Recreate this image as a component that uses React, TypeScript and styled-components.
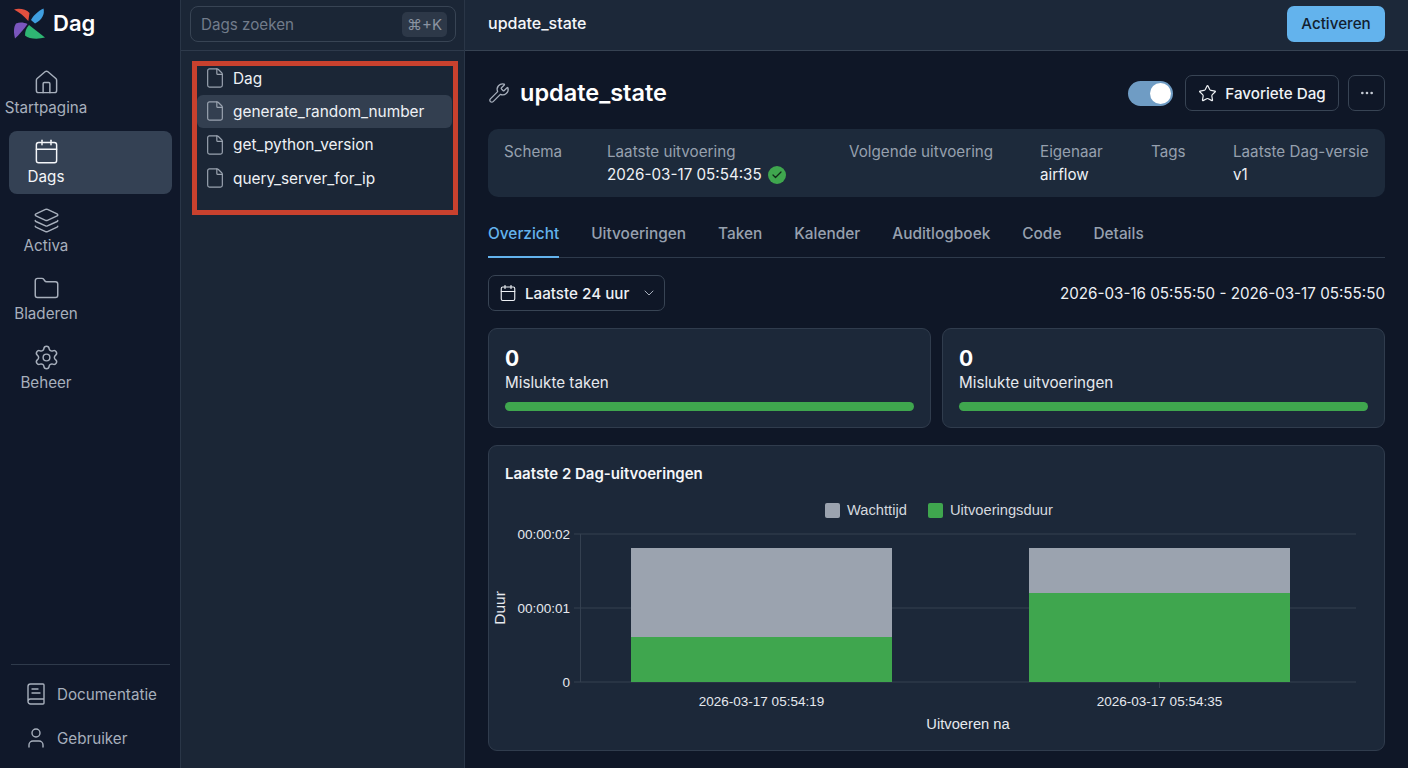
import styled, { createGlobalStyle } from 'styled-components';
import { BookText, Calendar, ChevronDown, Check, Ellipsis, File, Folder, House, Layers, Settings, Star, User, Wrench } from 'lucide-react';

const GlobalStyle = createGlobalStyle`
	html, body {
		margin: 0;
		padding: 0;
		background: #0f1727;
	}
	* {
		box-sizing: border-box;
	}
`;

const Page = styled.div`
	display: grid;
	grid-template-columns: 181px 284px 943px;
	width: 1408px;
	height: 768px;
	overflow: hidden;
	font-family: Inter, 'Noto Sans', sans-serif;
	font-size: 15.2px;
	color: #f4f6f9;
`;

const Sidebar = styled.aside`
	display: flex;
	flex-direction: column;
	background: #10182a;
	border-right: 1px solid #2a3647;
	padding: 8px 10px 15px 9px;
`;

const Brand = styled.div`
	display: flex;
	align-items: center;
	gap: 7px;
	height: 32px;
	margin: 0 0 22px 5px;
	font-size: 22px;
	font-weight: 600;
	line-height: 28px;
	color: #fff;
`;

const BrandName = styled.span`
	margin-bottom: 3px;
`;

const Nav = styled.nav`
	display: flex;
	flex-direction: column;
	gap: 5.75px;
	margin-right: -2px;
`;

const NavItem = styled.a<{ $active?: boolean }>`
	display: block;
	height: 63px;
	border-radius: 8px;
	background: ${(p) => (p.$active ? '#344154' : 'transparent')};
	color: ${(p) => (p.$active ? '#f4f6f9' : '#a7afbc')};
`;

const NavInner = styled.span`
	display: flex;
	flex-direction: column;
	align-items: center;
	gap: 1px;
	width: 74px;
	padding-top: 7px;
	white-space: nowrap;
	line-height: 22px;
`;

const SidebarFoot = styled.div`
	display: flex;
	flex-direction: column;
	gap: 14px;
	margin-top: auto;
	margin-left: 2px;
	padding: 14px 0 0 13px;
	border-top: 1px solid #2f3a4b;
`;

const FootLink = styled.a`
	display: flex;
	align-items: center;
	gap: 9px;
	height: 30px;
	color: #a7afbc;
`;

const Panel = styled.section`
	background: #1b2636;
	border-right: 1px solid #2a3647;
`;

const SearchBar = styled.div`
	height: 51px;
	padding: 6px 8px 0 9px;
	border-bottom: 1px solid #2e3a4b;
`;

const SearchBox = styled.div`
	display: flex;
	align-items: center;
	justify-content: space-between;
	height: 36px;
	padding: 0 8px 0 10px;
	border: 1px solid #384454;
	border-radius: 8px;
	color: #727c8b;
`;

const Kbd = styled.span`
	padding: 3px 5px;
	border-radius: 5px;
	background: #2d3848;
	color: #8a93a1;
	font-size: 15px;
	line-height: 19px;
`;

const MarkBox = styled.div`
	display: flex;
	flex-direction: column;
	height: 154px;
	margin: 10px 6px 0 11px;
	padding: 0 1px 0 0;
	border: 5px solid #c9412e;
`;

const FileRow = styled.div<{ $active?: boolean }>`
	display: flex;
	align-items: center;
	gap: 7px;
	height: 33.3px;
	padding-left: 7px;
	border-radius: 6px;
	background: ${(p) => (p.$active ? '#333f50' : 'transparent')};
	color: #eef1f5;
	font-size: 15.4px;
	flex: none;
	&:first-child {
		margin-top: -4.5px;
	}
	svg {
		color: #9aa3b0;
		flex: none;
	}
`;

const Main = styled.main`
	display: flex;
	flex-direction: column;
	background: #0f1727;
`;

const TopBar = styled.header`
	display: flex;
	align-items: center;
	justify-content: space-between;
	height: 51px;
	padding: 0 23px 3px;
	background: #1c2839;
	border-bottom: 1px solid #364252;
	font-size: 16px;
	font-weight: 500;
	flex: none;
`;

const TopTitle = styled.span`
	margin-bottom: 2px;
`;

const PrimaryButton = styled.button`
	height: 36px;
	width: 98px;
	border: 0;
	border-radius: 7px;
	background: #63b3ed;
	color: #12202f;
	font: 500 15.2px Inter, sans-serif;
`;

const Content = styled.div`
	display: flex;
	flex-direction: column;
	padding: 24px 23px 0;
`;

const TitleRow = styled.div`
	display: flex;
	align-items: center;
	height: 36px;
`;

const Heading = styled.h1`
	margin: 0 auto 0 10px;
	color: #fff;
	font-size: 23.5px;
	font-weight: 600;
	line-height: 36px;
`;

const Toggle = styled.span`
	display: flex;
	align-items: center;
	justify-content: flex-end;
	width: 45px;
	height: 25px;
	margin-right: 12px;
	padding: 2px;
	border-radius: 13px;
	background: #6f9cc4;
	&::after {
		content: '';
		width: 21px;
		height: 21px;
		border-radius: 50%;
		background: #fff;
	}
`;

const OutlineButton = styled.button<{ $square?: boolean }>`
	display: flex;
	align-items: center;
	justify-content: center;
	gap: 8px;
	width: ${(p) => (p.$square ? '37px' : '154px')};
	height: 36px;
	margin-left: ${(p) => (p.$square ? '9px' : '0')};
	border: 1px solid #384454;
	border-radius: 7px;
	background: transparent;
	color: #f0f3f6;
	font: 500 15.2px Inter, sans-serif;
`;

const MetaCard = styled.div`
	display: grid;
	grid-template-columns: 103px 242px 191px 111px 82px 1fr;
	height: 68px;
	margin-top: 18px;
	padding: 12px 16px 0;
	border-radius: 10px;
	background: #1d2a3b;
`;

const MetaCol = styled.div`
	display: flex;
	flex-direction: column;
	gap: 1px;
	white-space: nowrap;
`;

const MetaLabel = styled.span`
	color: #96a0ae;
	line-height: 22px;
`;

const MetaValue = styled.span`
	display: flex;
	align-items: center;
	gap: 6px;
	color: #eef1f5;
	line-height: 22px;
`;

const StatusDot = styled.span`
	display: flex;
	align-items: center;
	justify-content: center;
	width: 18px;
	height: 18px;
	border-radius: 50%;
	background: #3fa64e;
	color: #0f2a18;
`;

const Tabs = styled.div`
	display: flex;
	gap: 32px;
	height: 61px;
	border-bottom: 1px solid #2e3a4b;
	font-size: 15.4px;
	flex: none;
`;

const Tab = styled.a<{ $active?: boolean }>`
	height: 61px;
	padding-top: 26px;
	line-height: 22px;
	font-weight: 500;
	color: ${(p) => (p.$active ? '#63b3ed' : '#97a1af')};
	border-bottom: 2px solid ${(p) => (p.$active ? '#63b3ed' : 'transparent')};
`;

const FilterRow = styled.div`
	display: flex;
	align-items: center;
	justify-content: space-between;
	margin-top: 17px;
	color: #eef1f5;
`;

const RangeSelect = styled.div`
	display: flex;
	align-items: center;
	gap: 8px;
	width: 177px;
	height: 36px;
	padding-left: 10px;
	border: 1px solid #384454;
	border-radius: 7px;
	font-weight: 500;
	svg:last-child {
		margin-left: 4px;
		color: #a7afbc;
	}
`;

const StatGrid = styled.div`
	display: grid;
	grid-template-columns: 1fr 1fr;
	gap: 11px;
	margin-top: 17px;
`;

const Card = styled.div`
	border: 1px solid #303c4d;
	border-radius: 9px;
	background: #1c2839;
`;

const StatCard = styled(Card)`
	height: 100px;
	padding: 17px 16px 0;
`;

const StatNumber = styled.div`
	color: #fff;
	font-size: 21px;
	font-weight: 700;
	line-height: 25px;
`;

const StatLabel = styled.div`
	line-height: 24px;
	color: #e6e9ee;
`;

const Progress = styled.div`
	height: 9px;
	margin-top: 7px;
	border-radius: 5px;
	background: #3fa64e;
`;

const ChartCard = styled(Card)`
	height: 306px;
	margin-top: 17px;
	padding-top: 16px;
`;

const ChartTitle = styled.h2`
	margin: 0 0 4px 16px;
	color: #f4f6f9;
	font-size: 15px;
	font-weight: 600;
	line-height: 24px;
`;

const ChartSvg = styled.svg`
	display: block;
	font-family: 'Liberation Sans', Arial, sans-serif;
	font-size: 14.7px;
`;

const navItems = [
	{ label: 'Startpagina', icon: House },
	{ label: 'Dags', icon: Calendar, active: true },
	{ label: 'Activa', icon: Layers },
	{ label: 'Bladeren', icon: Folder },
	{ label: 'Beheer', icon: Settings },
];

const dagFiles = ['Dag', 'generate_random_number', 'get_python_version', 'query_server_for_ip'];
const tabs = ['Overzicht', 'Uitvoeringen', 'Taken', 'Kalender', 'Auditlogboek', 'Code', 'Details'];

const bars = [
	{ x: 631, split: 637, label: '2026-03-17 05:54:19' },
	{ x: 1029, split: 593, label: '2026-03-17 05:54:35' },
];

const Logo = () => (
	<svg width='32' height='32' viewBox='0 0 32 32'>
		<path d='M0 1.5 C5 0 12 1 15.5 5 L14.3 13 C10 8 5 4 0 1.5Z' fill='#e2503f' />
		<path d='M17 12 C19 8 24 3 29.5 0.5 C31 6 28 12 21 15.5Z' fill='#3f9ee0' />
		<path d='M15 17 L31 29.5 C24 31.5 15 31 11 27.5 C11 24 12 20 15 17Z' fill='#2fb573' />
		<path d='M1 30.5 C-0.5 25 -0.5 19 2 15.5 C6 14 10 14.5 13.5 16 C10 21 5 27 1 30.5Z' fill='#7a56bd' />
	</svg>
);

const RunsChart = () => (
	<ChartSvg width='895' height='260' viewBox='489 490 895 260'>
		<rect x='825' y='503' width='15' height='15' rx='2' fill='#9ba3af' />
		<text x='847' y='515' fill='#d5d9df'>Wachttijd</text>
		<rect x='928' y='503' width='15' height='15' rx='2' fill='#3fa64e' />
		<text x='950' y='515' fill='#d5d9df'>Uitvoeringsduur</text>

		{[534, 608, 682].map((y) => (
			<line key={y} x1='574' x2='1356' y1={y} y2={y} stroke='#344050' />
		))}
		<line x1='580.5' x2='580.5' y1='534' y2='682' stroke='#344050' />
		<line x1='1159.5' x2='1159.5' y1='682' y2='688' stroke='#344050' />

		<text x='570' y='539' textAnchor='end' fill='#e6e9ee' fontSize='13.5'>00:00:02</text>
		<text x='570' y='613' textAnchor='end' fill='#e6e9ee' fontSize='13.5'>00:00:01</text>
		<text x='570' y='687' textAnchor='end' fill='#e6e9ee' fontSize='13.5'>0</text>
		<text transform='translate(505 608) rotate(-90)' textAnchor='middle' fill='#e6e9ee' fontSize='15.5'>Duur</text>

		{bars.map((bar) => (
			<g key={bar.x}>
				<rect x={bar.x} y='548' width='261' height={bar.split - 548} fill='#9ba3af' />
				<rect x={bar.x} y={bar.split} width='261' height={682 - bar.split} fill='#3fa64e' />
				<text x={bar.x + 130.5} y='706' textAnchor='middle' fill='#e6e9ee' fontSize='13.5'>
					{bar.label}
				</text>
			</g>
		))}
		<text x='968' y='729' textAnchor='middle' fill='#e6e9ee'>Uitvoeren na</text>
	</ChartSvg>
);

const App = () => {
	return (
		<Page>
			<GlobalStyle />
			<Sidebar>
				<Brand>
					<Logo />
					<BrandName>Dag</BrandName>
				</Brand>
				<Nav>
					{navItems.map(({ label, icon: Icon, active }) => (
						<NavItem key={label} $active={active}>
							<NavInner>
								<Icon size={27} strokeWidth={1.3} />
								{label}
							</NavInner>
						</NavItem>
					))}
				</Nav>
				<SidebarFoot>
					<FootLink>
						<BookText size={24} strokeWidth={1.4} />
						Documentatie
					</FootLink>
					<FootLink>
						<User size={24} strokeWidth={1.4} />
						Gebruiker
					</FootLink>
				</SidebarFoot>
			</Sidebar>

			<Panel>
				<SearchBar>
					<SearchBox>
						Dags zoeken
						<Kbd>⌘+K</Kbd>
					</SearchBox>
				</SearchBar>
				<MarkBox>
					{dagFiles.map((name) => (
						<FileRow key={name} $active={name === 'generate_random_number'}>
							<File size={22} strokeWidth={1.3} />
							{name}
						</FileRow>
					))}
				</MarkBox>
			</Panel>

			<Main>
				<TopBar>
					<TopTitle>update_state</TopTitle>
					<PrimaryButton>Activeren</PrimaryButton>
				</TopBar>
				<Content>
					<TitleRow>
						<Wrench size={22} strokeWidth={1.4} color='#a7afbc' />
						<Heading>update_state</Heading>
						<Toggle />
						<OutlineButton>
							<Star size={19} strokeWidth={1.5} />
							Favoriete Dag
						</OutlineButton>
						<OutlineButton $square>
							<Ellipsis size={16} color='#c4cad3' />
						</OutlineButton>
					</TitleRow>

					<MetaCard>
						<MetaCol>
							<MetaLabel>Schema</MetaLabel>
						</MetaCol>
						<MetaCol>
							<MetaLabel>Laatste uitvoering</MetaLabel>
							<MetaValue>
								2026-03-17 05:54:35
								<StatusDot>
									<Check size={12} strokeWidth={2.5} />
								</StatusDot>
							</MetaValue>
						</MetaCol>
						<MetaCol>
							<MetaLabel>Volgende uitvoering</MetaLabel>
						</MetaCol>
						<MetaCol>
							<MetaLabel>Eigenaar</MetaLabel>
							<MetaValue>airflow</MetaValue>
						</MetaCol>
						<MetaCol>
							<MetaLabel>Tags</MetaLabel>
						</MetaCol>
						<MetaCol>
							<MetaLabel>Laatste Dag-versie</MetaLabel>
							<MetaValue>v1</MetaValue>
						</MetaCol>
					</MetaCard>

					<Tabs>
						{tabs.map((tab) => (
							<Tab key={tab} $active={tab === 'Overzicht'}>
								{tab}
							</Tab>
						))}
					</Tabs>

					<FilterRow>
						<RangeSelect>
							<Calendar size={18} strokeWidth={1.5} />
							Laatste 24 uur
							<ChevronDown size={16} strokeWidth={1.5} />
						</RangeSelect>
						2026-03-16 05:55:50 - 2026-03-17 05:55:50
					</FilterRow>

					<StatGrid>
						<StatCard>
							<StatNumber>0</StatNumber>
							<StatLabel>Mislukte taken</StatLabel>
							<Progress />
						</StatCard>
						<StatCard>
							<StatNumber>0</StatNumber>
							<StatLabel>Mislukte uitvoeringen</StatLabel>
							<Progress />
						</StatCard>
					</StatGrid>

					<ChartCard>
						<ChartTitle>Laatste 2 Dag-uitvoeringen</ChartTitle>
						<RunsChart />
					</ChartCard>
				</Content>
			</Main>
		</Page>
	);
};

export default App;
